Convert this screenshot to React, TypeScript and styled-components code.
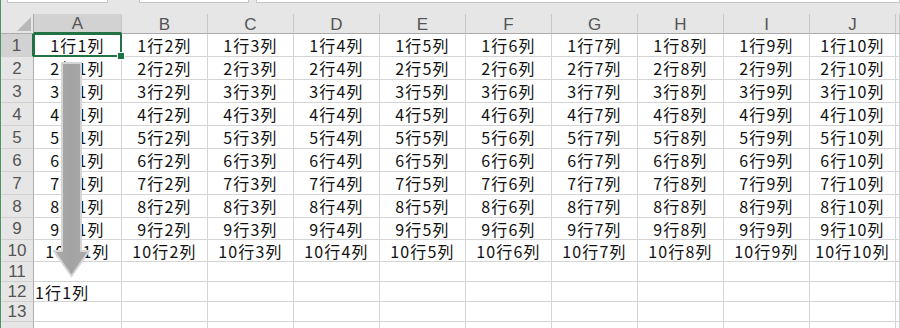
import React from "react";
import styled, { createGlobalStyle } from "styled-components";

const GREEN = "#217346";
const GRID = "#d4d4d4";
const HEADER_BG = "#e6e6e6";
const HEADER_SELECTED = "#d2d2d2";

const COLUMNS = ["A", "B", "C", "D", "E", "F", "G", "H", "I", "J", ""];
const ROW_HEIGHTS = [23, 23, 23, 23, 23, 23, 23, 23, 22, 22, 20, 20, 20, 20];

const GlobalStyle = createGlobalStyle`
  html, body {
    margin: 0;
    padding: 0;
    background: #fff;
  }
  body {
    width: 900px;
    height: 328px;
    overflow: hidden;
    font-family: "Noto Sans CJK JP", "Noto Sans", sans-serif;
  }
`;

const Window = styled.div`
  width: 900px;
  height: 328px;
  box-sizing: border-box;
  overflow: hidden;
  display: flex;
  flex-direction: column;
  border-left: 1px solid #4b9466;
  background: #fff;
`;

const FormulaStrip = styled.div`
  flex: none;
  height: 14px;
  display: flex;
  align-items: flex-start;
  background: ${HEADER_BG};
  padding-left: 6px;
`;

const StripBox = styled.div<{ $width?: number; $gap: number }>`
  height: 3px;
  box-sizing: border-box;
  background: #fff;
  border: 1px solid #c6c6c6;
  border-top: none;
  margin-right: ${(p) => p.$gap}px;
  ${(p) => (p.$width ? `width: ${p.$width}px;` : "flex: 1;")}
`;

const Sheet = styled.div`
  position: relative;
  display: grid;
  grid-template-columns: 33px 88px repeat(9, 86px) 1fr;
  grid-template-rows: 20px ${ROW_HEIGHTS.map((h) => `${h}px`).join(" ")};
`;

const Corner = styled.div`
  box-sizing: border-box;
  background: ${HEADER_BG};
  border-right: 1px solid #ababab;
  border-bottom: 1px solid #ababab;
  display: flex;
  align-items: flex-end;
  justify-content: flex-end;
  padding: 0 2px 2px 0;
`;

const HeaderLabel = styled.div`
  box-sizing: border-box;
  display: flex;
  align-items: center;
  justify-content: center;
  color: #555;
  font-family: "Liberation Sans", Arial, sans-serif;
  font-size: 17px;
  line-height: 1;
`;

const ColHeader = styled(HeaderLabel)<{ $selected?: boolean }>`
  background: ${(p) => (p.$selected ? HEADER_SELECTED : HEADER_BG)};
  border-right: 1px solid #c8c8c8;
  border-bottom: ${(p) => (p.$selected ? `2px solid ${GREEN}` : "1px solid #ababab")};
  padding-top: 1px;
`;

const RowHeader = styled(HeaderLabel)<{ $selected?: boolean }>`
  background: ${(p) => (p.$selected ? HEADER_SELECTED : HEADER_BG)};
  border-right: ${(p) => (p.$selected ? `2px solid ${GREEN}` : "1px solid #ababab")};
  border-bottom: 1px solid #d0d0d0;
`;

const Cell = styled.div<{ $align?: "center" | "left" }>`
  position: relative;
  box-sizing: border-box;
  display: flex;
  align-items: center;
  justify-content: ${(p) => (p.$align === "left" ? "flex-start" : "center")};
  padding-left: ${(p) => (p.$align === "left" ? "1px" : "0")};
  border-right: 1px solid ${GRID};
  border-bottom: 1px solid ${GRID};
  color: #111;
  font-size: 16px;
  letter-spacing: 1.2px;
  line-height: 1;
  white-space: nowrap;
  overflow: visible;
`;

const Selection = styled.div`
  position: absolute;
  top: -1px;
  left: -1px;
  right: -1px;
  bottom: -1px;
  border: 2px solid ${GREEN};
  z-index: 2;
  pointer-events: none;
`;

const FillHandle = styled.div`
  position: absolute;
  right: -5px;
  bottom: -5px;
  width: 6px;
  height: 6px;
  background: ${GREEN};
  border: 1px solid #fff;
`;

const ArrowOverlay = styled.svg`
  position: absolute;
  left: 49px;
  top: 47px;
  z-index: 3;
`;

function DownArrow() {
  return (
    <ArrowOverlay width={42} height={218} viewBox="0 0 42 218">
      <defs>
        <linearGradient id="shaft" x1="0" y1="0" x2="1" y2="0">
          <stop offset="0" stopColor="#a9a9a9" />
          <stop offset="0.5" stopColor="#a3a3a3" />
          <stop offset="1" stopColor="#a9a9a9" />
        </linearGradient>
      </defs>
      <path
        d="M12 2 H31 V190 H39 L21.5 215 L4 190 H12 Z"
        fill="url(#shaft)"
        stroke="#d5d5d5"
        strokeWidth={2}
        strokeLinejoin="round"
      />
    </ArrowOverlay>
  );
}

function SelectAllMark() {
  return (
    <svg width={14} height={14} viewBox="0 0 14 14">
      <polygon points="14,0 14,14 0,14" fill="#b9b9b9" />
    </svg>
  );
}

function cellText(row: number, col: number) {
  if (row <= 10 && col <= 10) return `${row}行${col}列`;
  if (row === 12 && col === 1) return "1行1列";
  return "";
}

export default function App() {
  return (
    <>
      <GlobalStyle />
      <Window>
        <FormulaStrip>
          <StripBox $width={101} $gap={31} />
          <StripBox $width={110} $gap={7} />
          <StripBox $gap={0} />
        </FormulaStrip>
        <Sheet>
          <Corner>
            <SelectAllMark />
          </Corner>
          {COLUMNS.map((c, i) => (
            <ColHeader key={`h${i}`} $selected={i === 0}>
              {c}
            </ColHeader>
          ))}
          {ROW_HEIGHTS.map((_, r) => {
            const row = r + 1;
            return (
              <React.Fragment key={row}>
                <RowHeader $selected={row === 1}>{row <= 13 ? row : ""}</RowHeader>
                {COLUMNS.map((_, c) => {
                  const col = c + 1;
                  const isCopy = row === 12 && col === 1;
                  return (
                    <Cell key={col} $align={isCopy ? "left" : "center"}>
                      {cellText(row, col)}
                      {row === 1 && col === 1 ? (
                        <Selection>
                          <FillHandle />
                        </Selection>
                      ) : null}
                    </Cell>
                  );
                })}
              </React.Fragment>
            );
          })}
          <DownArrow />
        </Sheet>
      </Window>
    </>
  );
}
